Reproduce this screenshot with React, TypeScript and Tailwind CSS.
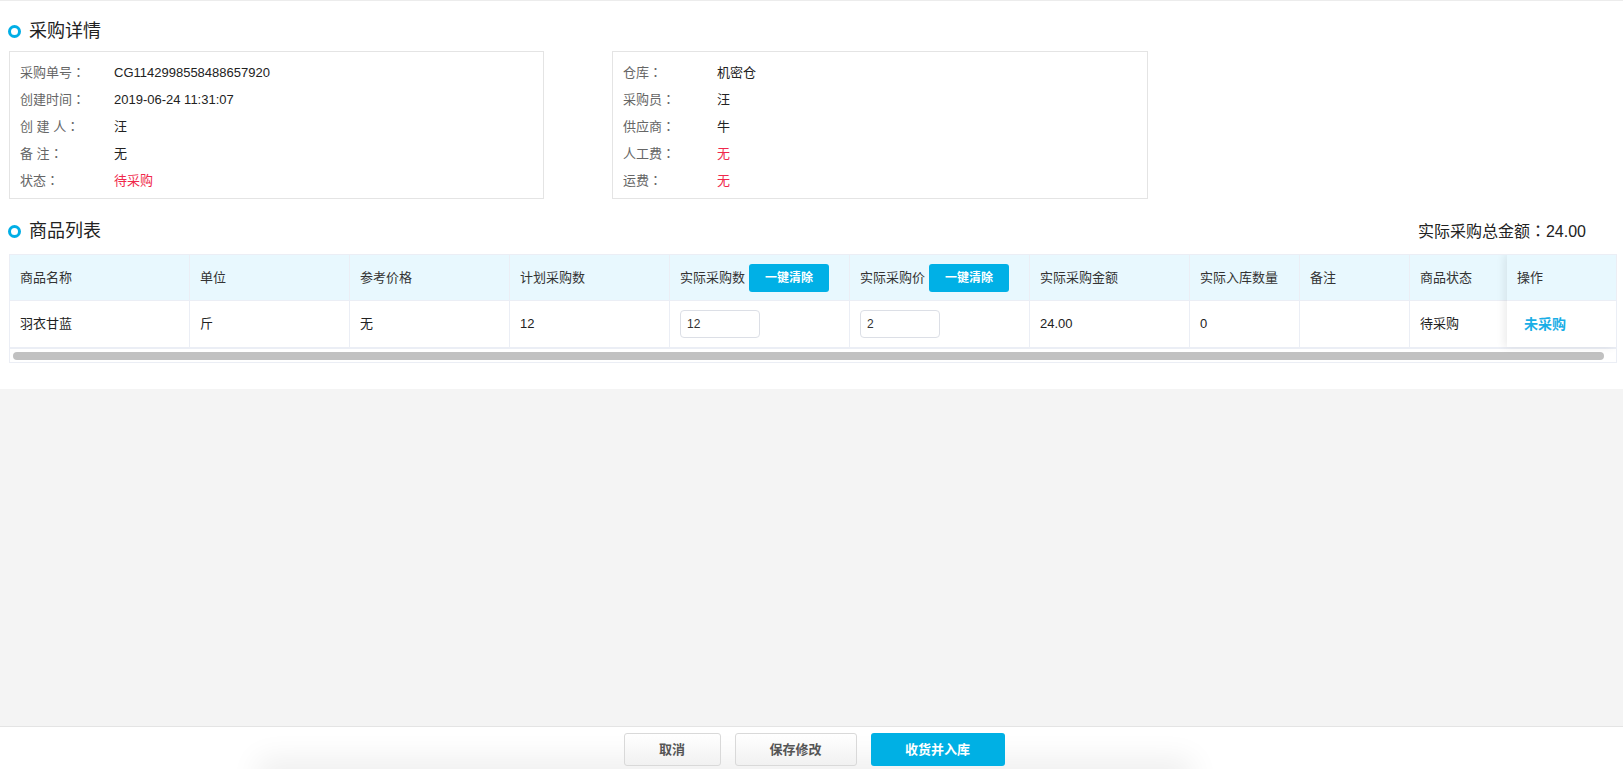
import React from "react";

const FONT = { fontFamily: '"Liberation Sans", "Noto Sans CJK SC", sans-serif' };

function Colon() {
  return <span style={{ fontFamily: '"Noto Sans CJK JP", sans-serif' }}>：</span>;
}

function SectionTitle({ text }: { text: string }) {
  return (
    <div className="flex items-center h-[30px]">
      <span className="ml-[8px] w-[13px] h-[13px] rounded-full border-[3px] border-[#00aee6]" />
      <span className="ml-[8px] text-[18px] text-[#222]">{text}</span>
    </div>
  );
}

function InfoRow({ label, value, red }: { label: string; value: string; red?: boolean }) {
  return (
    <div className="flex items-center h-[27px] text-[13px]">
      <span className="w-[94px] text-[#666] whitespace-pre">
        {label}
        <Colon />
      </span>
      <span className={red ? "text-[#f0284b]" : "text-[#222]"}>{value}</span>
    </div>
  );
}

const cols = [180, 160, 160, 160, 180, 180, 160, 110, 110, 110];

function ClearBtn() {
  return (
    <span className="ml-[4px] inline-flex items-center justify-center w-[80px] h-[28px] rounded-[3px] bg-[#00b0e6] text-white text-[12px] font-bold">
      一键清除
    </span>
  );
}

function HeaderCell({ w, children }: { w: number; children: React.ReactNode }) {
  return (
    <div
      className="shrink-0 flex items-center pl-[10px] border-r border-[#ebeef5] text-[13px] text-[#333] h-full"
      style={{ width: w }}
    >
      {children}
    </div>
  );
}

function BodyCell({ w, children }: { w: number; children?: React.ReactNode }) {
  return (
    <div
      className="shrink-0 flex items-center pl-[10px] border-r border-[#ebeef5] text-[13px] text-[#222] h-full"
      style={{ width: w }}
    >
      {children}
    </div>
  );
}

function Input({ value }: { value: string }) {
  return (
    <div className="w-[80px] h-[28px] border border-[#dcdfe6] rounded-[4px] flex items-center pl-[6px] text-[12px] text-[#333]">
      {value}
    </div>
  );
}

export default function App() {
  const headers: React.ReactNode[] = [
    "商品名称",
    "单位",
    "参考价格",
    "计划采购数",
    <span className="flex items-center">
      实际采购数
      <ClearBtn />
    </span>,
    <span className="flex items-center">
      实际采购价
      <ClearBtn />
    </span>,
    "实际采购金额",
    "实际入库数量",
    "备注",
    "商品状态",
  ];
  const body: React.ReactNode[] = [
    "羽衣甘蓝",
    "斤",
    "无",
    "12",
    <Input value="12" />,
    <Input value="2" />,
    "24.00",
    "0",
    "",
    "待采购",
  ];

  return (
    <div className="h-[769px] w-full flex flex-col bg-[#f4f4f4] overflow-hidden" style={FONT}>
      <div className="bg-white border-t border-[#ececec] pt-[15px] pb-[26px]">
        <SectionTitle text="采购详情" />
        <div className="flex mt-[5px] ml-[9px]">
          <div className="w-[535px] border border-[#e4e4e4] pt-[7px] pb-[4px] pl-[10px]">
            <InfoRow label="采购单号" value="CG1142998558488657920" />
            <InfoRow label="创建时间" value="2019-06-24 11:31:07" />
            <InfoRow label="创 建 人" value="汪" />
            <InfoRow label="备 注" value="无" />
            <InfoRow label="状态" value="待采购" red />
          </div>
          <div className="ml-[68px] w-[536px] border border-[#e4e4e4] pt-[7px] pb-[4px] pl-[10px]">
            <InfoRow label="仓库" value="机密仓" />
            <InfoRow label="采购员" value="汪" />
            <InfoRow label="供应商" value="牛" />
            <InfoRow label="人工费" value="无" red />
            <InfoRow label="运费" value="无" red />
          </div>
        </div>

        <div className="flex items-center justify-between mt-[17px] pr-[37px]">
          <SectionTitle text="商品列表" />
          <span className="text-[16px] text-[#222]">
            实际采购总金额
            <Colon />
            24.00
          </span>
        </div>

        <div className="mt-[8px] ml-[9px] mr-[6px] relative border border-[#ebeef5] overflow-hidden">
          <div className="flex h-[46px] bg-[#e8f8fe] border-b border-[#ebeef5]">
            {cols.map((w, i) => (
              <HeaderCell key={i} w={w}>
                {headers[i]}
              </HeaderCell>
            ))}
          </div>
          <div className="flex h-[48px] border-b-2 border-[#ebeef5]">
            {cols.map((w, i) => (
              <BodyCell key={i} w={w}>
                {body[i]}
              </BodyCell>
            ))}
          </div>
          <div className="h-[13px] flex items-center px-[3px]">
            <div className="h-[8px] w-[1591px] rounded-full bg-[#c1c1c1]" />
          </div>
          <div className="absolute top-0 right-0 w-[109px] h-[92px] bg-white shadow-[-3px_0_8px_rgba(0,0,0,0.08)]">
            <div className="h-[46px] bg-[#e8f8fe] border-b border-[#ebeef5] flex items-center pl-[10px] text-[13px] text-[#333]">
              操作
            </div>
            <div className="h-[46px] flex items-center pl-[17px] text-[14px] font-bold text-[#1aaee6]">
              未采购
            </div>
          </div>
        </div>
      </div>

      <div className="flex-1" />

      <div className="relative h-[43px] bg-white border-t border-[#e4e4e4] flex justify-center pt-[6px] overflow-hidden">
        <div className="absolute left-[270px] w-[910px] top-[44px] h-[10px] shadow-[0_0_30px_12px_rgba(0,0,0,0.07)]" />
        <div className="relative flex gap-[14px] h-[33px] ml-[5px]">
          <button className="w-[97px] h-[33px] rounded-[3px] border border-[#d9d9d9] bg-gradient-to-b from-white to-[#f1f1f1] text-[13px] font-bold text-[#555]">
            取消
          </button>
          <button className="w-[122px] h-[33px] rounded-[3px] border border-[#d9d9d9] bg-gradient-to-b from-white to-[#f1f1f1] text-[13px] font-bold text-[#555]">
            保存修改
          </button>
          <button className="w-[134px] h-[33px] rounded-[3px] bg-[#00b0e4] text-[13px] font-bold text-white">
            收货并入库
          </button>
        </div>
      </div>
    </div>
  );
}
